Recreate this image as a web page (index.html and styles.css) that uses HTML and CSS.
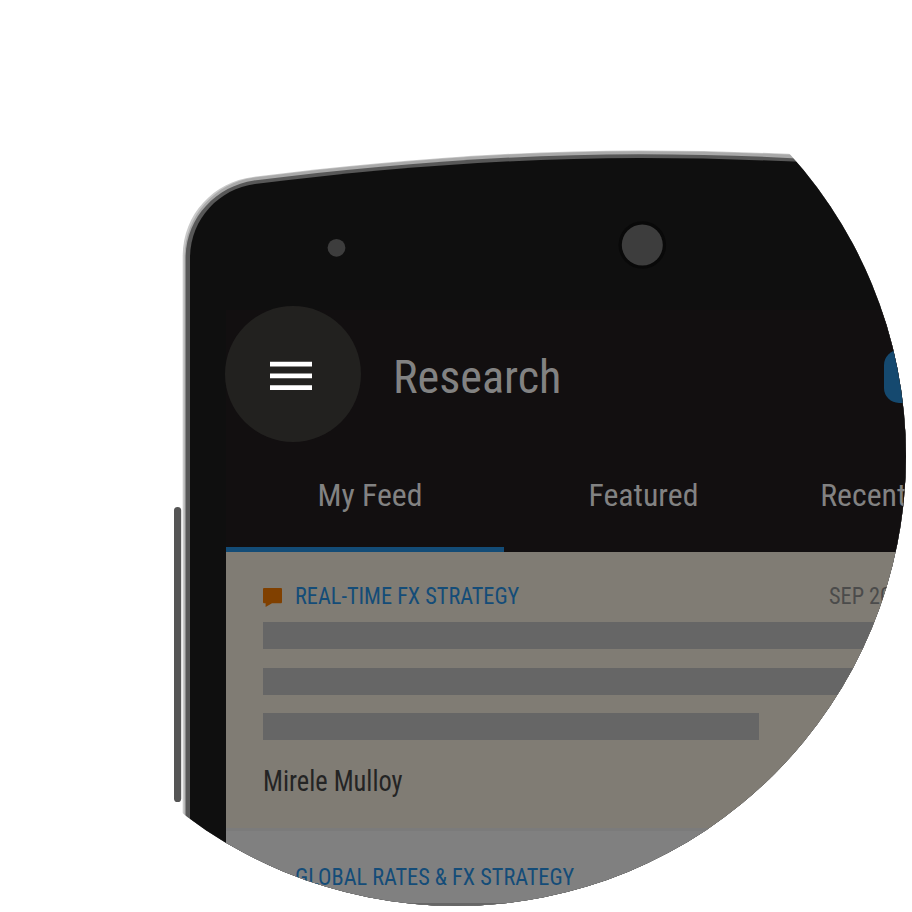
FILE: index.html
```
<!DOCTYPE html>
<html lang="en">
<head>
<meta charset="utf-8">
<title>Research</title>
<link rel="stylesheet" href="styles.css">
</head>
<body>
<main class="spotlight">
  <svg class="phone" viewBox="0 0 912 912" aria-hidden="true">
    <rect x="174" y="507" width="7.2" height="295" rx="3.6" fill="#555"/>
    <path fill="#c9c9c9" d="M182.700 920V256C182.700 214 214 182 253 177C380 161 510 150.500 640 150.500C740 150.500 830 155 912 163V920Z"/>
    <path fill="#a9a9a9" d="M184.500 920V257C184.500 216 215 183 253 177.700C380 161.700 510 151.200 640 151.200C740 151.200 830 155.700 912 163.700V920Z"/>
    <path fill="#585858" d="M185.600 920V258C185.600 218 216 186 254 180.500C380 165 510 154.200 640 154.200C740 154.200 830 159 912 167V920Z"/>
    <path fill="#0f0f0f" d="M190 920V258C190 220 218 189 255 184C380 168.500 510 158 640 158C740 158 830 162.500 912 170.500V920Z"/>
    <circle cx="336.500" cy="247.800" r="8.900" fill="#3d3d3d"/>
    <circle cx="642.300" cy="245" r="23.800" fill="#090909"/>
    <circle cx="642.300" cy="245" r="20.500" fill="#3d3d3d"/>
  </svg>
  <section class="screen">
    <header class="bar">
      <button class="menu" aria-label="Menu"><svg viewBox="0 0 42 30"><path d="M0 .700H42V5.500H0ZM0 12.400H42V17.200H0ZM0 24.200H42V29H0Z"/></svg></button>
      <h1><span class="t title">Research</span></h1>
      <div class="action"></div>
    </header>
    <nav class="tabs">
      <a class="tab active"><span class="t">My Feed</span></a>
      <a class="tab"><span class="t">Featured</span></a>
      <a class="tab last"><span class="t">Recent</span></a>
    </nav>
    <article class="card unread">
      <div class="meta">
        <svg class="bubble" viewBox="0 0 19 19"><path fill="#804000" d="M1 0H18Q19 0 19 1V14Q19 15.300 18 15.300H9L2.600 19V15.300H1Q0 15.300 0 14V1Q0 0 1 0Z"/></svg>
        <h2><span class="t narrow">REAL-TIME FX STRATEGY</span></h2>
        <time><span class="t narrow">SEP 20</span></time>
      </div>
      <div class="line"></div>
      <div class="line"></div>
      <div class="line short"></div>
      <p class="author"><span class="t">Mirele Mulloy</span></p>
    </article>
    <article class="card">
      <div class="meta">
        <svg class="bubble" viewBox="0 0 19 19"></svg>
        <h2><span class="t narrow">GLOBAL RATES &amp; FX STRATEGY</span></h2>
      </div>
      <div class="line"></div>
    </article>
  </section>
</main>
</body>
</html>
```
FILE: styles.css
```
* { box-sizing: border-box; margin: 0; padding: 0; }
body { width: 912px; height: 912px; overflow: hidden; background: #fff; font-family: "Roboto Condensed", Roboto, sans-serif; font-stretch: condensed; font-weight: 420; }
.spotlight { position: relative; width: 912px; height: 912px; overflow: hidden; padding: 310px 0 0 225.700px; clip-path: circle(450px at 456px 456px); }
.phone { position: absolute; left: 0; top: 0; width: 912px; height: 912px; }
.screen { position: relative; width: 836px; height: 640px; background: #808080; }
.t { display: inline-block; white-space: nowrap; transform-origin: 0 50%; }
.title { transform: scaleX(.983); }
.narrow { transform: scaleX(.929); }
h1, h2 { font-weight: 420; }

.bar { display: flex; align-items: center; height: 128px; background: #120f10; color: #828282; }
.menu { width: 136px; height: 136px; flex: none; margin-left: -.700px; border: 0; border-radius: 50%; background: #22211f; display: flex; align-items: center; justify-content: center; padding: 4px 4px 0 0; }
.menu svg { width: 42px; height: 30px; fill: #fff; }
.bar h1 { font-size: 47px; line-height: 56px; margin: 6px 0 0 32px; width: 491px; flex: none; }
.action { width: 80px; height: 53px; flex: none; border-radius: 15px; background: #15496f; margin-top: 4px; }

.tabs { display: flex; height: 114px; background: #120f10; color: #828282; font-size: 31.800px; }
.tab { width: 278.500px; height: 114px; flex: none; text-align: center; line-height: 36px; padding-top: 39px; border-bottom: 5px solid transparent; }
.tab.active { border-color: #134c77; padding-left: 10px; }
.tab.last { text-align: left; padding-left: 37.500px; }

.card { height: 280px; padding: 34px 0 0 37.500px; background: #808080; }
.card.unread { height: 278.500px; padding-top: 32px; background: #807c74; border-bottom: 3.500px solid #7b7b7b; }
.meta { display: flex; height: 38px; }
.unread .meta { height: 38.400px; }
.bubble { width: 19px; height: 19px; margin-top: 4px; }
.meta h2 { font-size: 24px; line-height: 24px; color: #144c78; margin-left: 12.500px; width: 534px; }
.meta time { font-size: 24px; line-height: 24px; color: #4b4b4b; }
.line { height: 27px; margin-bottom: 18.400px; background: #666; }
.line.short { width: 496px; }
.author { font-size: 29px; line-height: 32px; margin-top: 25px; color: #242424; }
.author .t { transform: scaleX(.91); }
```
